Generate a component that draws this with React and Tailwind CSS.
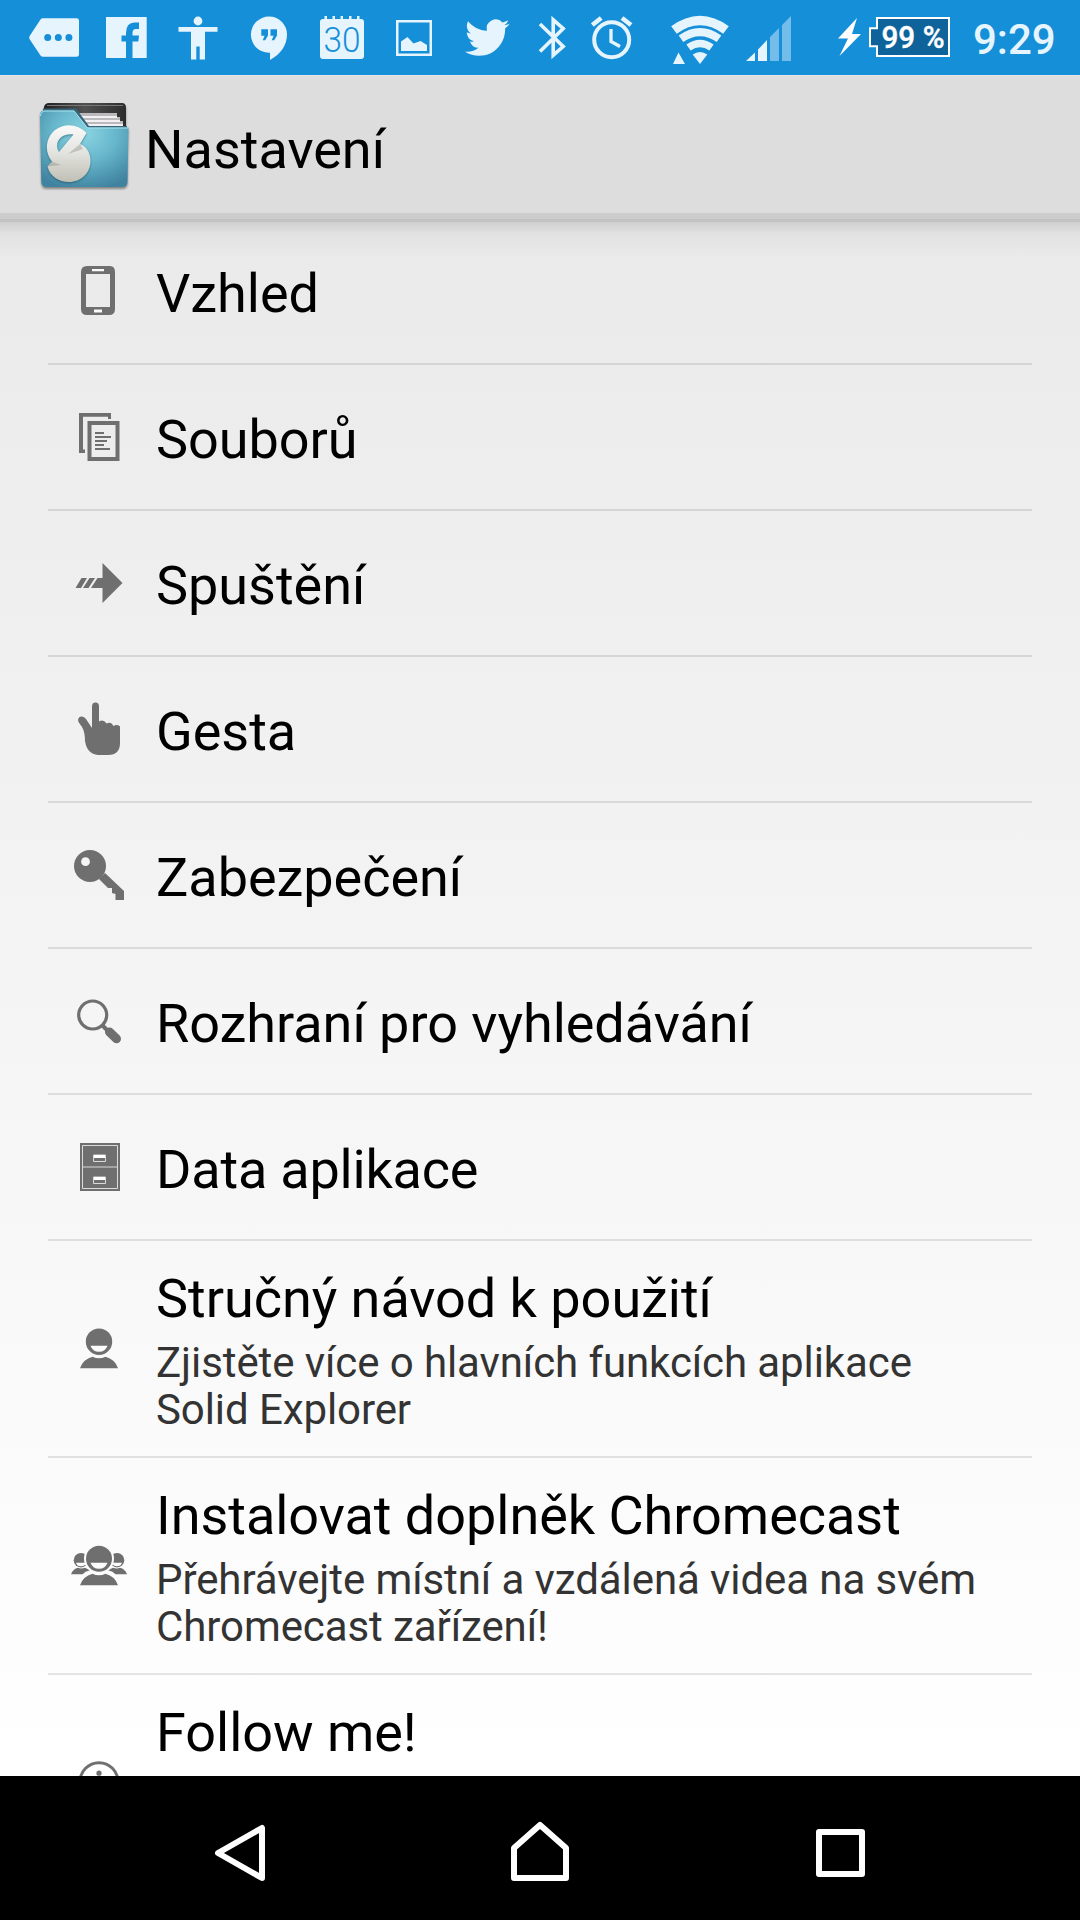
import React from "react";

const PALE = "#e6f4fd";
const GRAY = "#6f6f6f";

/* Status glyph: full-height strip of the bar, x/w are the strip's span. */
function Glyph({ x, w, className = "", children }) {
  return (
    <svg className={`shrink-0 ${className}`} width={w} height="75" viewBox={`${x} 0 ${w} 75`} fill={PALE}>
      {children}
    </svg>
  );
}

function StatusBar() {
  return (
    <div className="flex h-[75px] w-full shrink-0 items-center bg-[#168fd9]">
      <Glyph x={29} w={50} className="ml-[29px]">
        <path d="M43 18.3H76.500Q79 18.300 79 21V54Q79 56.700 76.500 56.700H43Q41.500 56.700 40.500 55.400L29.800 39.500Q28.700 37.600 29.800 35.700L40.500 19.600Q41.500 18.300 43 18.300Z" />
        <g fill="#168fd9">
          <circle cx="47.700" cy="37.500" r="3.500" />
          <circle cx="58.300" cy="37.500" r="3.500" />
          <circle cx="68.900" cy="37.500" r="3.500" />
        </g>
      </Glyph>
      <Glyph x={106} w={41} className="ml-[27px]">
        <rect x="106" y="17" width="40.700" height="41" />
        <path fill="#168fd9" d="M126 58V41.500H121.500V35.500H126V33Q126 22.500 134.500 22.500H139V29H136Q132.500 29 132.500 33V35.500H139L138.300 41.500H132.500V58Z" />
      </Glyph>
      <Glyph x={178} w={41} className="ml-[31px]">
        <circle cx="198" cy="21" r="4.400" />
        <path d="M178.500 27H217.500V31.700H205V59.500H199.700V46.500H196.300V59.500H191V31.700H178.500Z" />
      </Glyph>
      <Glyph x={250} w={39} className="ml-[31px]">
        <path d="M269 16.500A18 18 0 0 1 287 34.500C287 45 281 54 270 60V52.700H269A18 18 0 0 1 269 16.500Z" />
        <path fill="#168fd9" d="M261.300 29.300H268V35.500L265.200 40.300H262.700L264.600 35.800H261.300ZM270.500 29.300H277V35.500L274.200 40.300H271.700L273.600 35.800H270.500Z" />
      </Glyph>
      <Glyph x={319} w={46} className="ml-[30px]">
        <path d="M323 19H361Q364 19 364 22V56Q364 59 361 59H323Q320 59 320 56V22Q320 19 323 19ZM324.500 16H327V20H324.500ZM332.500 16H335V20H332.500ZM340.600 16H343V20H340.600ZM349 16H351.500V20H349ZM357 16H359.500V20H357Z" />
        <text x="342" y="52" textAnchor="middle" textLength="37" lengthAdjust="spacingAndGlyphs" fill="#168fd9" fontSize="35" className="font-['Roboto',sans-serif] font-light">30</text>
      </Glyph>
      <Glyph x={395} w={38} className="ml-[30px]">
        <path fillRule="evenodd" d="M396 20H432V56H396ZM398.500 22.500V53.500H429.500V22.500Z" />
        <path d="M401 51V41.500L407.500 37L413.500 43.500L420.500 41L427 45V51Z" />
      </Glyph>
      <Glyph x={465} w={45} className="ml-[32px]">
        <g transform="translate(465 15.300) scale(1.860)">
          <path d="M23.953 4.570a10 10 0 01-2.825.775 4.958 4.958 0 002.163-2.723c-.951.555-2.005.959-3.127 1.184a4.920 4.920 0 00-8.384 4.482C7.690 8.095 4.067 6.130 1.640 3.162a4.822 4.822 0 00-.666 2.475c0 1.710.870 3.213 2.188 4.096a4.904 4.904 0 01-2.228-.616v.060a4.923 4.923 0 003.946 4.827 4.996 4.996 0 01-2.212.085 4.936 4.936 0 004.604 3.417 9.867 9.867 0 01-6.102 2.105c-.390 0-.779-.023-1.170-.067a13.995 13.995 0 007.557 2.209c9.053 0 13.998-7.496 13.998-13.985 0-.210 0-.420-.015-.630A9.935 9.935 0 0024 4.590z" />
        </g>
      </Glyph>
      <Glyph x={537} w={30} className="ml-[27px]">
        <path fill="none" stroke={PALE} strokeWidth="3.600" d="M540 24L563.200 46.500L553.200 55.200V19.800L563.200 28.500L540 51.500" />
      </Glyph>
      <Glyph x={590} w={43} className="ml-[23px]">
        <g fill="none" stroke={PALE} strokeWidth="4">
          <circle cx="611.700" cy="39.700" r="17.500" />
          <path strokeWidth="3.300" d="M611 29V41.500L620 46.500" />
          <path strokeWidth="4.600" d="M592.300 25L601.200 18M622 18L631 25" />
        </g>
      </Glyph>
      <Glyph x={670} w={60} className="ml-[37px]">
        <g fill="none" stroke={PALE}>
          <path strokeWidth="9.500" d="M674 30Q700 11 726 30" />
          <path strokeWidth="8" d="M681 38.700Q700 25.500 719 38.700" />
          <path strokeWidth="7.500" d="M688.500 47.500Q700 39.500 711.500 47.500" />
        </g>
        <path d="M692.700 54.500Q700 49.500 707.300 54.500L700 64ZM678.500 52.500L685 64H673Z" />
      </Glyph>
      <Glyph x={746} w={46} className="ml-[16px]">
        <path d="M746 61L755 52.500V61ZM758 49.500L767 40V61H758Z" />
        <path opacity=".45" d="M770 37L779 28V61H770ZM782 25L791 16V61H782Z" />
      </Glyph>
      <Glyph x={838} w={24} className="ml-[46px]">
        <path fill="#fff" d="M857 18L838 38.500H848L839.500 56L861 34H852Z" />
      </Glyph>
      <svg className="ml-[7px] shrink-0" width="81" height="75" viewBox="869 0 81 75">
        <path d="M877 18H949V56H877V46.200H870V28.200H877Z" fill="#0e639b" stroke="#fff" strokeWidth="2" />
        <text x="881.500" y="47.700" textLength="63" lengthAdjust="spacingAndGlyphs" fill="#fff" stroke="#fff" strokeWidth=".4" fontSize="31" className="font-['Roboto',sans-serif] font-medium">99 %</text>
      </svg>
      <span className="ml-[23px] pt-[4px] font-['Roboto',sans-serif] text-[42px] font-medium leading-[71px] text-[#e6f4fd]">9:29</span>
    </div>
  );
}

function FolderLogo() {
  return (
    <svg className="ml-[37px] mt-[3px] shrink-0 overflow-visible" width="94" height="90" viewBox="38 101 94 90">
      <defs>
        <radialGradient id="front" cx=".5" cy=".3" r=".75">
          <stop offset="0" stopColor="#8ad5e3" />
          <stop offset=".5" stopColor="#66b5ca" />
          <stop offset="1" stopColor="#3f83a0" />
        </radialGradient>
        <linearGradient id="silver" x1="0" y1="0" x2="0" y2="1">
          <stop offset="0" stopColor="#fafafa" />
          <stop offset=".5" stopColor="#e2e2df" />
          <stop offset="1" stopColor="#bfbfb3" />
        </linearGradient>
        <linearGradient id="back" x1="0" y1="0" x2="1" y2="0">
          <stop offset="0" stopColor="#202020" />
          <stop offset=".5" stopColor="#515151" />
          <stop offset="1" stopColor="#2d2d2d" />
        </linearGradient>
      </defs>
      <g className="drop-shadow-[0_2px_1px_rgba(0,0,0,0.4)]">
        <path fill="url(#back)" d="M45 107Q46 103 50 103H123Q127 103 127 108V150H45Z" />
        <path stroke="#777" strokeWidth="1" d="M48 105.500H124" />
        <path fill="#bcb9bd" d="M78 113H118V117H121V121H124V128H84Z" />
        <path stroke="#f2f0f2" strokeWidth="2" d="M82 117H118M84 121H121M87 125H124" />
        <path fill="#38667a" d="M44 108.500H77L90 126H128V135H44Z" />
        <path fill="url(#front)" d="M45 110.500H75L88.500 127.500H129.500L128.500 182Q128.500 187 123 187H48Q42.500 187 42.300 182L41 115Q41 110.500 45 110.500Z" />
        <path fill="none" stroke="#a8e3ed" strokeWidth="1" d="M41.500 116Q42 111 46 111H75L88.500 128H129" />
      </g>
      <g className="drop-shadow-[0_1px_1px_rgba(20,60,80,0.5)]">
        <path fill="url(#silver)" fillRule="evenodd" d="M87.500 133C80 124.500 66 122 56 130C46 138 45.500 153 53 161.500L48.500 166.500C51 176.500 60 182 70 182C82 182 91.500 173 91.500 161C91.500 153 88 147 81 144ZM74.500 134.500L60 152C54.500 144 61 132.500 74.500 134.500Z" />
        <path fill="#8d8d86" opacity=".4" d="M81 144L69 154L84 149ZM53 161.500L48.500 166.500L62 165Z" />
      </g>
    </svg>
  );
}

/* List icons share a 60px square viewport centred on (30, 30). */
const icons = {
  phone: (
    <g transform="translate(-1 0)">
      <path fillRule="evenodd" d="M18 5H42Q47 5 47 11V48Q47 54 41 54H19Q13 54 13 48V11Q13 5 19 5ZM18 13V46H42V13Z" />
      <path fill="#fafafa" d="M24 8H36V10.300H24ZM26 48.500H34V51.500H26Z" />
    </g>
  ),
  files: (
    <>
      <path d="M10 6H42V12H39V9.800H14V42.500H16V46H10Z" />
      <path fillRule="evenodd" d="M18.500 14H50.500V54H18.500ZM22.500 18V50H46.500V18Z" />
      <path fill="none" stroke={GRAY} strokeWidth="2" d="M26 26H35M26 30H42M26 34H38M26 38H35M26 42H41" />
    </>
  ),
  arrow: <path d="M33.500 10L53.500 30L33.500 50V35H22L28.500 25H33.500ZM12.500 25H18L12 35H6.500ZM20.500 25H26L19.500 35H14Z" />,
  hand: <path d="M23 29V7.500Q23 3.500 26.500 3.500T30 7.500V22.500Q34.500 20 37.500 24.500Q42 22 44.500 27Q48 25 51 27.500V44Q51 56 39 56H29Q18 55 16 42Q16 33 13 28L9.500 23Q8 18.500 12 17.500Q15 17 17 20Z" />,
  key: (
    <>
      <circle cx="21" cy="21" r="16" />
      <path d="M30 34L36 28L55 46V55H46.500V49L43 48V43H39Z" />
      <circle cx="16.500" cy="16.700" r="4.400" fill="#f6f6f6" />
    </>
  ),
  search: (
    <>
      <circle cx="23.700" cy="24" r="14" fill="none" stroke={GRAY} strokeWidth="3.200" />
      <path fill="none" stroke={GRAY} strokeWidth="4" d="M33 34L39 40" />
      <path fill="none" stroke={GRAY} strokeWidth="9" strokeLinecap="round" strokeLinejoin="round" d="M40.500 41L47.500 47.800" />
    </>
  ),
  cabinet: (
    <>
      <rect x="11" y="6" width="40" height="48" />
      <path fill="none" stroke="#dadada" strokeWidth="1" d="M13.500 8.500H48.500V51.500H13.500ZM13.500 30H48.500" />
      <path fill="none" stroke="#dadada" strokeWidth="1" d="M24.500 18H36.500V24.500H24.500ZM24.500 40H36.500V46.500H24.500Z" />
      <path fill="#fff" d="M25 18H36V21H25ZM25 40H36V43H25Z" />
    </>
  ),
  person: (
    <g transform="translate(0 -0.8)">
      <circle cx="30" cy="23.500" r="13.200" />
      <path fill="#fcfcfc" d="M21.500 27.500H38.500Q36.500 33.500 30 33.500T21.500 27.500Z" />
      <path d="M11 50Q14 41 23.500 38.500Q30 41.500 36.500 38.500Q46 41 49 50Z" />
    </g>
  ),
  people: (
    <g transform="translate(0 -0.8)">
      <circle cx="12" cy="25" r="7.300" />
      <circle cx="48" cy="25" r="7.300" />
      <path fill="#fcfcfc" d="M7 27.500H17Q16 31 12 31T7 27.500ZM43 27.500H53Q52 31 48 31T43 27.500Z" />
      <path d="M2 39Q4 33.500 9 32.500Q12 34 16 32.500L21 35Q16 36 13.500 39ZM58 39Q56 33.500 51 32.500Q48 34 44 32.500L39 35Q44 36 46.500 39Z" />
      <circle cx="30" cy="23.500" r="14" stroke="#fcfcfc" strokeWidth="2" />
      <path fill="#fcfcfc" d="M21.500 27.500H38.500Q36.500 33.500 30 33.500T21.500 27.500Z" />
      <path d="M11 50Q14 41 23.500 38.500Q30 41.500 36.500 38.500Q46 41 49 50Z" />
    </g>
  ),
  info: (
    <g transform="translate(0 -1.3)">
      <circle cx="30" cy="30" r="19" fill="none" stroke={GRAY} strokeWidth="3" />
      <circle cx="30" cy="21.500" r="2.600" />
      <path d="M28 27H32V40H28Z" />
    </g>
  ),
};

const rows = [
  { icon: "phone", title: "Vzhled" },
  { icon: "files", title: "Souborů" },
  { icon: "arrow", title: "Spuštění" },
  { icon: "hand", title: "Gesta" },
  { icon: "key", title: "Zabezpečení" },
  { icon: "search", title: "Rozhraní pro vyhledávání" },
  { icon: "cabinet", title: "Data aplikace", tracking: "tracking-[-0.2px]" },
  { icon: "person", title: "Stručný návod k použití", note: ["Zjistěte více o hlavních funkcích aplikace", "Solid Explorer"] },
  { icon: "people", title: "Instalovat doplněk Chromecast", note: ["Přehrávejte místní a vzdálená videa na svém", "Chromecast zařízení!"] },
  { icon: "info", title: "Follow me!", note: [] },
];

function Row({ icon, title, note, tracking = "tracking-[-0.03px]" }) {
  return (
    <li className={`mx-[48px] flex shrink-0 items-center border-b-2 border-black/10 ${note ? "h-[217px]" : "h-[146px]"}`}>
      <svg className="ml-[21px] shrink-0" width="60" height="60" viewBox="0 0 60 60" fill={GRAY}>
        {icons[icon]}
      </svg>
      <div className={`ml-[27px] whitespace-nowrap ${note ? "h-full pt-[26px]" : "pt-[5px]"}`}>
        <div className={`text-[54px] leading-[64px] text-black ${tracking}`}>{title}</div>
        {note && (
          <div className="pt-[8px] text-[42px] leading-[47px] tracking-[-0.09px] text-[#333]">
            {note.map((line) => (
              <div key={line}>{line}</div>
            ))}
          </div>
        )}
      </div>
    </li>
  );
}

function NavBar() {
  return (
    <nav className="flex h-[144px] w-full shrink-0 items-center bg-black">
      <svg className="ml-[210px]" width="60" height="70" viewBox="210 1813 60 70" fill="none" stroke="#fff" strokeWidth="6" strokeLinejoin="round">
        <path d="M262 1828V1878L218 1853Z" />
      </svg>
      <svg className="ml-[240px]" width="60" height="70" viewBox="510 1813 60 70" fill="none" stroke="#fff" strokeWidth="6" strokeLinejoin="round">
        <path d="M540 1825L566 1848V1878H514V1848Z" />
      </svg>
      <svg className="ml-[240px]" width="60" height="70" viewBox="810 1813 60 70" fill="none" stroke="#fff" strokeWidth="6" strokeLinejoin="round">
        <path d="M819 1832H862V1874H819Z" />
      </svg>
    </nav>
  );
}

export default function App() {
  return (
    <div className="flex h-[1920px] w-[1080px] flex-col overflow-hidden bg-white font-['Roboto',sans-serif]">
      <StatusBar />
      <header className="flex h-[138px] shrink-0 items-center border-t border-[#e6e6e6] bg-[#dddddd]">
        <FolderLogo />
        <h1 className="ml-[14px] pt-[10px] text-[54px] leading-[64px] text-black">Nastavení</h1>
      </header>
      <div className="h-[6px] shrink-0 bg-[#cccccc]" />
      <main className="min-h-0 flex-1 overflow-hidden bg-linear-to-b from-[#eaeaea] to-white">
        <ul className="flex flex-col bg-[linear-gradient(to_bottom,#c2c2c2_0px,#c2c2c2_3px,#d0d0d0_3px,rgba(222,222,222,0.7)_15px,transparent_38px)]">
          {rows.map((row) => (
            <Row key={row.title} {...row} />
          ))}
        </ul>
      </main>
      <NavBar />
    </div>
  );
}
